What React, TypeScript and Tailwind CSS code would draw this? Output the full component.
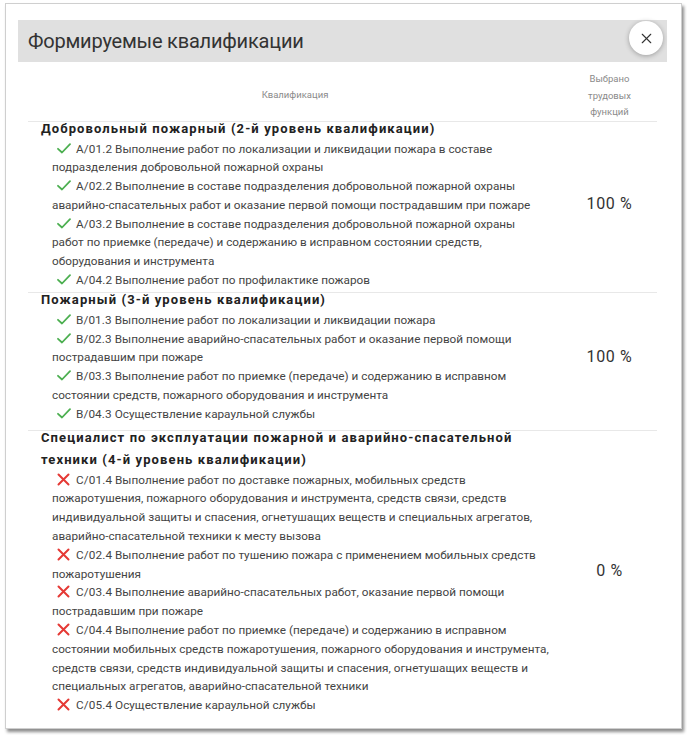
import { X } from "lucide-react";

type Item = { code: string; text: string };
type Row = { title: string; done: boolean; percent: string; items: Item[] };

const rows: Row[] = [
  {
    title: "Добровольный пожарный (2-й уровень квалификации)",
    done: true,
    percent: "100 %",
    items: [
      { code: "А/01.2", text: "Выполнение работ по локализации и ликвидации пожара в составе подразделения добровольной пожарной охраны" },
      { code: "А/02.2", text: "Выполнение в составе подразделения добровольной пожарной охраны аварийно-спасательных работ и оказание первой помощи пострадавшим при пожаре" },
      { code: "А/03.2", text: "Выполнение в составе подразделения добровольной пожарной охраны работ по приемке (передаче) и содержанию в исправном состоянии средств, оборудования и инструмента" },
      { code: "А/04.2", text: "Выполнение работ по профилактике пожаров" },
    ],
  },
  {
    title: "Пожарный (3-й уровень квалификации)",
    done: true,
    percent: "100 %",
    items: [
      { code: "В/01.3", text: "Выполнение работ по локализации и ликвидации пожара" },
      { code: "В/02.3", text: "Выполнение аварийно-спасательных работ и оказание первой помощи пострадавшим при пожаре" },
      { code: "В/03.3", text: "Выполнение работ по приемке (передаче) и содержанию в исправном состоянии средств, пожарного оборудования и инструмента" },
      { code: "В/04.3", text: "Осуществление караульной службы" },
    ],
  },
  {
    title: "Специалист по эксплуатации пожарной и аварийно-спасательной техники (4-й уровень квалификации)",
    done: false,
    percent: "0 %",
    items: [
      { code: "С/01.4", text: "Выполнение работ по доставке пожарных, мобильных средств пожаротушения, пожарного оборудования и инструмента, средств связи, средств индивидуальной защиты и спасения, огнетушащих веществ и специальных агрегатов, аварийно-спасательной техники к месту вызова" },
      { code: "С/02.4", text: "Выполнение работ по тушению пожара с применением мобильных средств пожаротушения" },
      { code: "С/03.4", text: "Выполнение аварийно-спасательных работ, оказание первой помощи пострадавшим при пожаре" },
      { code: "С/04.4", text: "Выполнение работ по приемке (передаче) и содержанию в исправном состоянии мобильных средств пожаротушения, пожарного оборудования и инструмента, средств связи, средств индивидуальной защиты и спасения, огнетушащих веществ и специальных агрегатов, аварийно-спасательной техники" },
      { code: "С/05.4", text: "Осуществление караульной службы" },
    ],
  },
];

const rowPad = ["pb-[2px]", "pb-[6px]", "pb-0"];

function CheckMark() {
  return (
    <svg width="14" height="11" viewBox="0 0 14 11" className="inline-block align-[-1px]">
      <path d="M1 5.8 L5 9.5 L13 1.2" fill="none" stroke="#4caf50" strokeWidth="1.8" strokeLinecap="round" strokeLinejoin="round" />
    </svg>
  );
}

function Cross() {
  return (
    <svg width="13" height="13" viewBox="0 0 13 13" className="inline-block align-[-2px]">
      <path d="M1.5 1.5 L11.5 11.5 M11.5 1.5 L1.5 11.5" fill="none" stroke="#e53935" strokeWidth="2" strokeLinecap="round" />
    </svg>
  );
}

export default function App() {
  return (
    <div className="min-h-[735px] w-[687px] bg-white pt-[3px] pl-[5px] font-['Roboto',sans-serif]">
      <div className="w-[677px] h-[726px] bg-white border border-[#cfcfcf] shadow-[2px_3px_3px_rgba(0,0,0,0.45)] pt-[16px] pl-[12px] pr-[14px]">
        {/* title bar */}
        <div className="h-[42px] bg-[#e0e0e0] flex items-center justify-between pl-[10px] pr-[4px]">
          <div className="text-[20px] text-[#333] tracking-[-0.2px]">Формируемые квалификации</div>
          <div className="w-[34px] h-[34px] rounded-full bg-white shadow-[0_1px_5px_rgba(0,0,0,0.3)] flex items-center justify-center translate-y-[-3px]">
            <X size={17} strokeWidth={1.6} color="#333" />
          </div>
        </div>

        <div className="px-[10px]">
          {/* table head */}
          <div className="grid grid-cols-[534px_1fr] border-b border-[#e8e8e8]">
            <div className="flex items-center justify-center text-[9.5px] text-[#8a8a8a] pt-[7px]">Квалификация</div>
            <div className="pt-[9px] text-center text-[9.5px] leading-[16.5px] text-[#8a8a8a]">
              Выбрано<br />трудовых<br />функций
            </div>
          </div>

          {rows.map((row, i) => (
            <div key={i} className={`grid grid-cols-[534px_1fr] ${rowPad[i]} ${i < rows.length - 1 ? "border-b border-[#e8e8e8]" : ""}`}>
              <div className="pl-[13px] pr-[13px]">
                <div className="text-[13px] font-bold tracking-[0.085em] text-[#222] leading-[22px] mt-[-4px]">
                  {row.title}
                </div>
                <div className="pl-[11px]">
                  {row.items.map((item, j) => (
                    <div key={j} className="text-[11.75px] leading-[18.8px] text-[#444]">
                      <span className="inline-block w-[14px] ml-[5px] mr-[5px]">{row.done ? <CheckMark /> : <Cross />}</span>
                      <span className="tracking-[0.01em]">{item.code}</span> {item.text}
                    </div>
                  ))}
                </div>
              </div>
              <div className="flex items-center justify-center text-[16px] text-[#333] tracking-[0.04em] pb-[3px]">
                {row.percent}
              </div>
            </div>
          ))}
        </div>
      </div>
    </div>
  );
}
